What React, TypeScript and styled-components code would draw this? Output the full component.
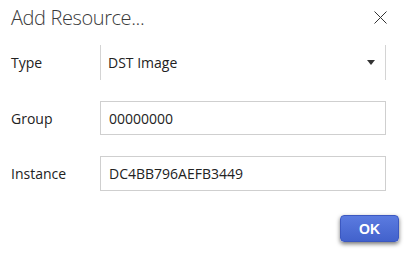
import React, { useState } from "react";
import styled, { createGlobalStyle } from "styled-components";

const GlobalStyle = createGlobalStyle`
  html, body {
    margin: 0;
    padding: 0;
    background: #ffffff;
  }
  body {
    font-family: "Open Sans", "Noto Sans", sans-serif;
    color: #222;
  }
`;

const Dialog = styled.div`
  width: 409px;
  height: 263px;
  box-sizing: border-box;
  padding: 0 23px 0 11px;
  background: #fff;
`;

const Header = styled.div`
  display: flex;
  align-items: center;
  justify-content: space-between;
  height: 34px;
`;

const Title = styled.h1`
  margin: 0;
  font-size: 20px;
  font-weight: 300;
  color: #3a3a3a;
  letter-spacing: -0.4px;
`;

const CloseButton = styled.button`
  width: 16px;
  height: 16px;
  padding: 0;
  margin-right: -2px;
  border: none;
  background: none;
  display: flex;
  align-items: center;
  justify-content: center;
  cursor: pointer;
`;

const Form = styled.div`
  display: grid;
  grid-template-columns: 89px 286px;
  row-gap: 21px;
  align-items: center;
  margin-top: 11px;
`;

const Label = styled.label`
  font-size: 14px;
  color: #222;
`;

const SelectBox = styled.div`
  position: relative;
  height: 35px;
  box-sizing: border-box;
  border-left: 1px solid #d4d4d4;
  border-right: 1px solid #d4d4d4;
  display: flex;
  align-items: center;
  padding-left: 7px;
  font-size: 14px;
`;

const Caret = styled.span`
  position: absolute;
  right: 10px;
  top: 15px;
  width: 0;
  height: 0;
  border-left: 4.5px solid transparent;
  border-right: 4.5px solid transparent;
  border-top: 5px solid #333;
`;

const Input = styled.input<{ $h: number }>`
  height: ${(p) => p.$h}px;
  width: 100%;
  box-sizing: border-box;
  border: 1px solid #cfcfcf;
  padding: 0 8px;
  font-family: "Open Sans", "Noto Sans", sans-serif;
  font-size: 14px;
  color: #222;
  outline: none;
`;

const Footer = styled.div`
  display: flex;
  justify-content: flex-end;
  margin-top: 24px;
  margin-right: -13px;
`;

const OkButton = styled.button`
  width: 59px;
  height: 27px;
  border: 1px solid #3c58c0;
  border-radius: 4px;
  background: linear-gradient(#5b7be0, #4262cc);
  box-shadow: 0 2px 4px rgba(0, 0, 0, 0.55);
  color: #fff;
  font-family: "Liberation Sans", Arial, sans-serif;
  font-weight: bold;
  font-size: 14px;
  cursor: pointer;
`;

export default function App() {
  const [group, setGroup] = useState("00000000");
  const [instance, setInstance] = useState("DC4BB796AEFB3449");

  return (
    <Dialog>
      <GlobalStyle />
      <Header>
        <Title>Add Resource...</Title>
        <CloseButton aria-label="Close">
          <svg width="13" height="13" viewBox="0 0 13 13">
            <path d="M0.5 0.5 L12.5 12.5 M12.5 0.5 L0.5 12.5" stroke="#333" strokeWidth="1" />
          </svg>
        </CloseButton>
      </Header>
      <Form>
        <Label>Type</Label>
        <SelectBox>
          DST Image
          <Caret />
        </SelectBox>
        <Label>Group</Label>
        <Input $h={34} value={group} onChange={(e) => setGroup(e.target.value)} />
        <Label>Instance</Label>
        <Input $h={35} value={instance} onChange={(e) => setInstance(e.target.value)} />
      </Form>
      <Footer>
        <OkButton>OK</OkButton>
      </Footer>
    </Dialog>
  );
}
